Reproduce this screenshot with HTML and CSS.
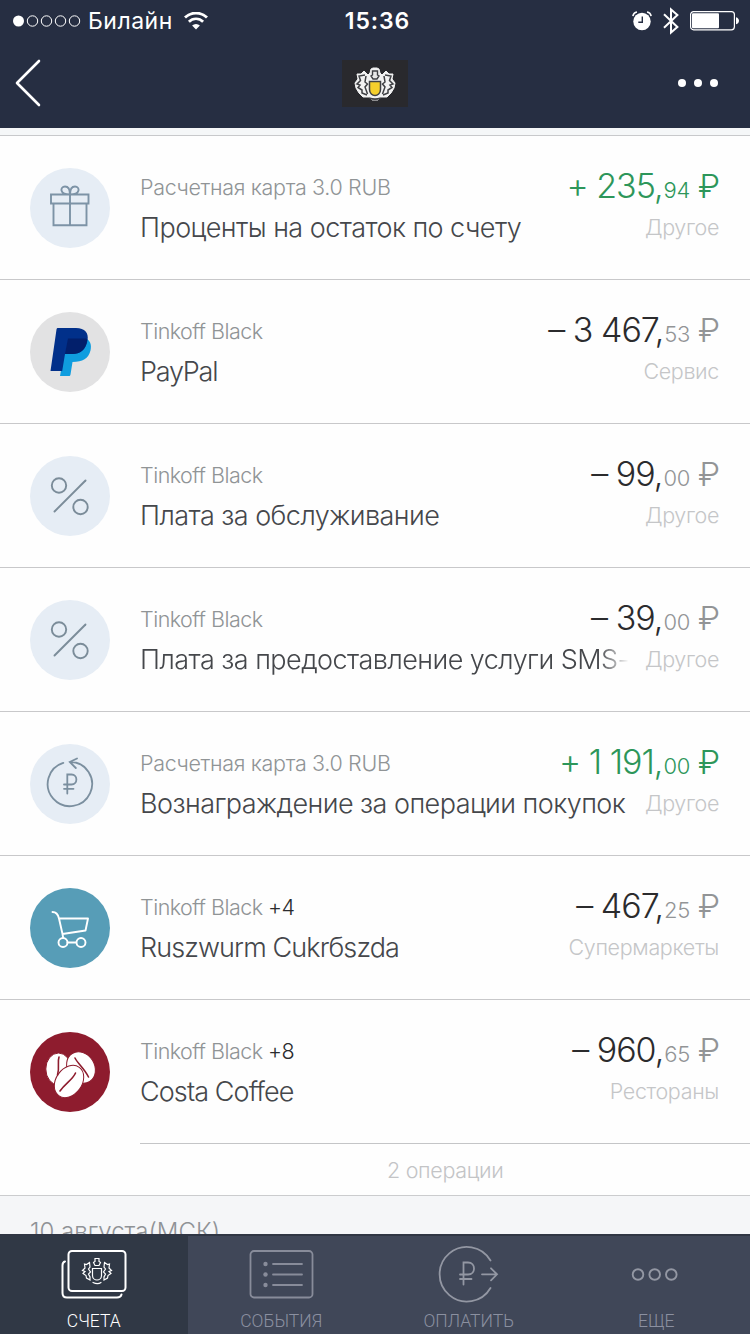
FILE: index.html
```html
<!DOCTYPE html>
<html lang="ru">
<head>
    <meta charset="UTF-8">
    <meta name="viewport" content="width=device-width, initial-scale=1.0">
    <title>Tinkoff</title>
    <link rel="stylesheet" href="styles.css">
</head>
<body>
    <header>
        <div class="status-bar">
            <div class="status-left">
                <svg class="signal" width="68" height="12" viewBox="0 0 68 12">
                    <circle cx="5.5" cy="6" r="5.5" fill="#fff"/>
                    <g fill="none" stroke="#fff" stroke-width="1">
                        <circle cx="19.5" cy="6" r="5.2"/>
                        <circle cx="33.5" cy="6" r="5.2"/>
                        <circle cx="47.5" cy="6" r="5.2"/>
                        <circle cx="61.5" cy="6" r="5.2"/>
                    </g>
                </svg>
                <span class="carrier">Билайн</span>
                <svg class="wifi" width="24" height="18" viewBox="0 0 24 18">
                    <path d="M1 5.6a15.6 15.6 0 0 1 22 0" fill="none" stroke="#fff" stroke-width="2.8"/>
                    <path d="M4.9 9.7a10 10 0 0 1 14.2 0" fill="none" stroke="#fff" stroke-width="2.7"/>
                    <path d="M12 17.6l-3.9-4a5.6 5.6 0 0 1 7.8 0z" fill="#fff"/>
                </svg>
            </div>
            <div class="time">15:36</div>
            <div class="status-right">
                <svg width="20" height="20" viewBox="0 0 20 20">
                    <circle cx="10" cy="10.5" r="8.7" fill="#fff"/>
                    <path d="M.9 5.2A5 5 0 0 1 5 1M19.1 5.2A5 5 0 0 0 15 1" fill="none" stroke="#fff" stroke-width="1.6"/>
                    <path d="M10.3 5.5v5.7H6.3" fill="none" stroke="#252d42" stroke-width="1.4"/>
                </svg>
                <svg width="16" height="28" viewBox="0 0 16 28">
                    <path d="M1 7.3l13.4 12.6L8 25.6V2.4l6.4 5.7L1 20.7" fill="none" stroke="#fff" stroke-width="2"/>
                </svg>
                <svg width="50" height="20" viewBox="0 0 50 20">
                    <rect x=".6" y=".6" width="43.8" height="18.2" rx="3" fill="none" stroke="#fff" stroke-width="1.2"/>
                    <rect x="2" y="2.2" width="27" height="15" rx="1" fill="#fff"/>
                    <path d="M46 6.3c4 1 4 6 0 7z" fill="#fff"/>
                </svg>
            </div>
        </div>
        <div class="nav-bar">
            <svg class="back" width="26" height="48" viewBox="0 0 26 48">
                <path d="M24 2L2 24l22 22" fill="none" stroke="#fff" stroke-width="2.6" stroke-linecap="round" stroke-linejoin="round"/>
            </svg>
            <div class="logo">
                <svg width="42" height="34" viewBox="0 0 42 34">
                    <path d="M16 6l1-4 2-1h4l2 1 1 4 2 2 4-4 3 3 4 0-1 5 3 4-1 5-3 5-4 4-6 0-3 3h-6l-3-3-6 0-4-4-3-5-1-5 3-4-1-5h4l3-3 4 4z" fill="#f2f2f2" stroke="#f2f2f2" stroke-linejoin="round"/>
                    <path d="M11 8L5 9l1.500 4.500-3.500 3.500 3 1-2 2.500 4 2.500 0 3 5 2M31 8l6 1-1.500 4.500 3.500 3.500-3 1 2 2.500-4 2.500 0 3-5 2M12 9l-1 6 2.500 2-2.500 3 2.500 7M30 9l1 6-2.500 2 2.500 3-2.500 7M15 31c4 1.500 8 1.500 12 0" fill="none" stroke="#3f4044" stroke-width="1.500"/>
                    <path d="M18.500 4h5v4l1.500 1-2 3h-4l-2-3 1.500-1z" fill="#e8e8e8" stroke="#3f4044" stroke-width="1.400"/>
                    <path d="M15.500 14.500h11v8c0 4-3 6-5.500 6s-5.500-2-5.500-6z" fill="#f5cf2c" stroke="#3f4044" stroke-width="1.500"/>
                </svg>
            </div>
            <div class="more"><i></i><i></i><i></i></div>
        </div>
    </header>

    <main>
        <div class="strip"></div>
        <div class="row">
            <div class="icon">
                <svg width="80" height="80" viewBox="0 0 80 80" fill="none" stroke="#7d93a6" stroke-width="1.9">
                    <path d="M21 26.5h37.500v9H21zM23.500 35.500v21.700h33V35.500M40 26.500v30.700M40 26.500c-11 0-10-8-5-8 3 0 5 3 5 8 0-5 2-8 5-8 5 0 6 8-5 8z"/>
                </svg>
            </div>
            <div class="info">
                <div class="line">
                    <div class="account wide">Расчетная карта 3.0 RUB</div>
                    <div class="amount plus">+ 235,<small>94 <b>₽</b></small></div>
                </div>
                <div class="line">
                    <div class="name">Проценты на остаток по счету</div>
                    <div class="category">Другое</div>
                </div>
            </div>
        </div>
        <div class="row">
            <div class="icon paypal">
                <svg width="80" height="80" viewBox="0 0 80 80">
                    <path d="M37 25.5h17c6 2 8 7 6.500 13-2 8-8 11.500-18 11.500l-2 12.500c-.2 1.300-.8 1.500-1.500 1.500h-9z" fill="#0f9ddf"/>
                    <path d="M28 16h18c9 0 13 5 11.500 12.500C56 38 50 42 42 42h-7l-2.800 17H20.500L26.500 17.500c.2-1 .5-1.500 1.500-1.500z" fill="#01308a"/>
                    <path d="M38 26.500h17c1 0 1.500.5 2.200 1.200C56 38 50 42 42 42h-7z" fill="#021f6b"/>
                </svg>
            </div>
            <div class="info">
                <div class="line">
                    <div class="account">Tinkoff Black</div>
                    <div class="amount">– 3 467,<small>53 <b>₽</b></small></div>
                </div>
                <div class="line">
                    <div class="name paypal-name">PayPal</div>
                    <div class="category">Сервис</div>
                </div>
            </div>
        </div>
        <div class="row">
            <div class="icon">
                <svg width="80" height="80" viewBox="0 0 80 80" fill="none" stroke="#7b8c99" stroke-width="1.9" stroke-linecap="round">
                    <circle cx="29" cy="29.5" r="7.2"/><circle cx="50.5" cy="51" r="7.2"/><path d="M55.500 24.500L24.500 55.500"/>
                </svg>
            </div>
            <div class="info">
                <div class="line">
                    <div class="account">Tinkoff Black</div>
                    <div class="amount">– 99,<small>00 <b>₽</b></small></div>
                </div>
                <div class="line">
                    <div class="name">Плата за обслуживание</div>
                    <div class="category">Другое</div>
                </div>
            </div>
        </div>
        <div class="row">
            <div class="icon">
                <svg width="80" height="80" viewBox="0 0 80 80" fill="none" stroke="#7b8c99" stroke-width="1.9" stroke-linecap="round">
                    <circle cx="29" cy="29.5" r="7.2"/><circle cx="50.5" cy="51" r="7.2"/><path d="M55.500 24.500L24.500 55.500"/>
                </svg>
            </div>
            <div class="info">
                <div class="line">
                    <div class="account">Tinkoff Black</div>
                    <div class="amount">– 39,<small>00 <b>₽</b></small></div>
                </div>
                <div class="line">
                    <div class="name fade">Плата за предоставление услуги SMS-</div>
                    <div class="category">Другое</div>
                </div>
            </div>
        </div>
        <div class="row">
            <div class="icon">
                <svg width="80" height="80" viewBox="0 0 80 80" fill="none" stroke="#7b8f9f" stroke-width="1.8" stroke-linecap="round">
                    <path d="M33.300 18.800A22.200 22.200 0 1 0 40 17.800M47 14.500l-7.200 3.500 6 6"/>
                    <path d="M37.300 49.500V30.500h4.200c6.500 0 6.500 10 0 10h-7.500M34 44.800h9.500"/>
                </svg>
            </div>
            <div class="info">
                <div class="line">
                    <div class="account wide">Расчетная карта 3.0 RUB</div>
                    <div class="amount plus">+ 1 191,<small>00 <b>₽</b></small></div>
                </div>
                <div class="line">
                    <div class="name">Вознаграждение за операции покупок</div>
                    <div class="category">Другое</div>
                </div>
            </div>
        </div>
        <div class="row">
            <div class="icon market">
                <svg width="80" height="80" viewBox="0 0 80 80" fill="none" stroke="#fff" stroke-width="1.9" stroke-linecap="round" stroke-linejoin="round">
                    <path d="M22.500 24c4 0 5.500 2 6.500 6.500h29L55.500 42.500l-23 3.500L29 30.500M32.500 46l.7 4M37.500 54.500h8.500"/>
                    <circle cx="33" cy="54.5" r="4.5"/><circle cx="51" cy="54.5" r="4.5"/>
                </svg>
            </div>
            <div class="info">
                <div class="line">
                    <div class="account">Tinkoff Black <em>+4</em></div>
                    <div class="amount">– 467,<small>25 <b>₽</b></small></div>
                </div>
                <div class="line">
                    <div class="name latin">Ruszwurm Cukrбszda</div>
                    <div class="category">Супермаркеты</div>
                </div>
            </div>
        </div>
        <div class="row last">
            <div class="icon costa">
                <svg width="80" height="80" viewBox="0 0 80 80">
                    <g fill="#fff" stroke="#8e1c2e" stroke-width="1">
                        <ellipse cx="28.500" cy="37" rx="12.700" ry="16"/>
                        <ellipse cx="51" cy="35.500" rx="13.500" ry="16.500" transform="rotate(-32 51 35.500)"/>
                        <ellipse cx="39" cy="49.500" rx="13" ry="17.500" transform="rotate(36 39 49.500)"/>
                    </g>
                    <path d="M29 25c-2 6 1 10-1.500 18M45 26c3 6 9 10 13.500 19M45.500 41c-3 7-10 10-15.500 18" fill="none" stroke="#8e1c2e" stroke-width="1.6" stroke-linecap="round"/>
                </svg>
            </div>
            <div class="info">
                <div class="line">
                    <div class="account">Tinkoff Black <em>+8</em></div>
                    <div class="amount">– 960,<small>65 <b>₽</b></small></div>
                </div>
                <div class="line">
                    <div class="name latin">Costa Coffee</div>
                    <div class="category">Рестораны</div>
                </div>
            </div>
        </div>
        <div class="count"><span>2 операции</span></div>
        <div class="date">10 августа(МСК)</div>
    </main>

    <nav class="tabs">
        <div class="tab active">
            <svg width="66" height="58" viewBox="0 0 66 58" fill="none" stroke="#fff" stroke-width="2" stroke-linecap="round">
                <rect x="7.500" y="6" width="57" height="40" rx="3.500"/>
                <path d="M4 16.500c-2 .5-2.500 2-2.500 4V48c0 3 1.500 4.500 4.500 4.500h50c2.500 0 4-1 4.500-3"/>
                <g stroke-width="1.200">
                    <path d="M31.500 23.500h9v7c0 3-2.500 4.500-4.500 4.500s-4.500-1.500-4.500-4.500zM34 13.500h4v3l1.500 1-1.500 3h-4l-1.500-3 1.500-1zM32 37.500c3 1.500 6 1.500 8 0"/>
                    <path d="M28.500 17.500l-3 2-2-.5.5 4-2.500 2.500 2.500 1-2 2 3 2 .5 2.500 3.500 2v-3l-1.500-3 2-2-2-3 1.500-2zM43.500 17.500l3 2 2-.5-.5 4 2.500 2.500-2.500 1 2 2-3 2-.5 2.500-3.500 2v-3l1.500-3-2-2 2-3-1.500-2z"/>
                </g>
            </svg>
            <span>СЧЕТА</span>
        </div>
        <div class="tab">
            <svg width="66" height="58" viewBox="-1 0 66 58" fill="none" stroke="#888c9a" stroke-width="1.8" stroke-linecap="round">
                <rect x="1.500" y="6" width="62" height="46.500" rx="3.500"/>
                <path d="M24 19h29M24 29.500h29M24 40h29"/>
                <g fill="#888c9a" stroke="none"><circle cx="16.500" cy="19" r="2.200"/><circle cx="16.500" cy="29.500" r="2.200"/><circle cx="16.500" cy="40" r="2.200"/></g>
            </svg>
            <span>СОБЫТИЯ</span>
        </div>
        <div class="tab">
            <svg width="66" height="58" viewBox="1 0 66 58" fill="none" stroke="#9397a3" stroke-width="1.8" stroke-linecap="round">
                <path d="M55.500 15.500A27.300 27.300 0 1 0 55.500 43M47 29.300h15M56 23.300l6 6-6 6"/>
                <path d="M28.500 39.500V17.500h4.500c8 0 8 12 0 12h-8M25 34h11.500"/>
            </svg>
            <span>ОПЛАТИТЬ</span>
        </div>
        <div class="tab">
            <svg width="66" height="58" viewBox="1 0 66 58" fill="none" stroke="#9397a3" stroke-width="1.9">
                <circle cx="16" cy="29.500" r="5.300"/><circle cx="32.700" cy="29.500" r="5.300"/><circle cx="49.300" cy="29.500" r="5.300"/>
            </svg>
            <span>ЕЩЕ</span>
        </div>
    </nav>
</body>
</html>
```
FILE: styles.css
```css
body {
    margin: 0;
    width: 750px;
    height: 1334px;
    display: flex;
    flex-direction: column;
    overflow: hidden;
    background: #fefefe;
    font-family: Inter, "Open Sans", sans-serif;
    font-weight: 300;
}
svg {
    display: block;
    flex: none;
}
header {
    height: 128px;
    flex: none;
    background: #262e42;
    color: #fff;
}
.status-bar, .nav-bar {
    display: grid;
    grid-template-columns: 1fr auto 1fr;
    align-items: center;
}
.status-bar {
    height: 41px;
    padding: 0 10px 0 13px;
}
.status-left, .status-right {
    display: flex;
    align-items: center;
}
.status-right {
    justify-content: flex-end;
    gap: 11px;
}
.carrier {
    margin-left: 7px;
    font-size: 23px;
    font-weight: 400;
    letter-spacing: 0.5px;
}
.wifi {
    margin-left: 11px;
}
.time {
    margin-left: 2px;
    font-size: 23px;
    font-weight: 600;
    letter-spacing: 0.9px;
}
.nav-bar {
    height: 83px;
    padding: 0 32px 0 15px;
}
.logo {
    display: flex;
    align-items: center;
    justify-content: center;
    width: 66px;
    height: 47px;
    margin: 2px 0 0 17px;
    background: #29292d;
}
.more {
    display: flex;
    justify-content: flex-end;
    gap: 8px;
}
.more i {
    width: 8px;
    height: 8px;
    border-radius: 50%;
    background: #fff;
}
main {
    flex: 1;
    min-height: 0;
    overflow: hidden;
}
.strip {
    height: 7px;
    background: #f5f7f8;
    border-bottom: 1px solid #c8c9cb;
}
.row {
    display: flex;
    box-sizing: border-box;
    height: 144px;
    padding: 32px 31px 0 30px;
    border-bottom: 1px solid #c8c8ca;
}
.row.last {
    height: 143px;
    border-bottom: none;
}
.icon {
    width: 80px;
    height: 80px;
    flex: none;
    margin-right: 30px;
    border-radius: 50%;
    background: #e6edf5;
}
.paypal { background: #e2e2e3; }
.market { background: #579db7; }
.costa { background: #8e1c2e; }
.info {
    flex: 1;
    min-width: 0;
}
.line {
    display: flex;
    justify-content: space-between;
    align-items: flex-start;
    height: 40px;
    white-space: nowrap;
}
.account {
    font-size: 21.5px;
    line-height: 39px;
    letter-spacing: -0.53px;
    color: #909496;
}
.account.wide {
    letter-spacing: -0.34px;
}
.account em {
    font-style: normal;
    color: #2b2c2e;
}
.amount {
    font-size: 34px;
    line-height: 36px;
    color: #2b2b2d;
    letter-spacing: -1px;
}
.amount small {
    margin-left: 1px;
    font-size: 22px;
    letter-spacing: -0.3px;
    color: #929496;
}
.amount b {
    margin: 0 -1px 0 2px;
    font-size: 33px;
    font-weight: 300;
    letter-spacing: 0;
}
.plus, .plus small {
    color: #2d965a;
}
.name {
    font-size: 27px;
    line-height: 39px;
    letter-spacing: -0.55px;
    color: #45474b;
    min-width: 0;
}
.name.latin {
    letter-spacing: -0.9px;
}
.name.paypal-name {
    letter-spacing: -1.2px;
}
.fade {
    -webkit-mask-image: linear-gradient(to right, #000 calc(100% - 30px), transparent);
    mask-image: linear-gradient(to right, #000 calc(100% - 30px), transparent);
}
.category {
    font-size: 21.5px;
    line-height: 39px;
    letter-spacing: -0.35px;
    color: #c5c6c8;
}
.count {
    height: 52px;
    border-bottom: 1px solid #cbccce;
}
.count span {
    display: block;
    margin-left: 140px;
    border-top: 1px solid #c4c5c7;
    font-size: 21.5px;
    line-height: 53px;
    letter-spacing: -0.3px;
    text-indent: 247px;
    color: #c3c4c6;
}
.date {
    height: 60px;
    padding: 16px 30px 0;
    background: #f5f6f8;
    font-size: 24px;
    line-height: 40px;
    color: #8f9296;
}
.tabs {
    display: grid;
    grid-template-columns: repeat(4, 1fr);
    flex: none;
    box-sizing: border-box;
    height: 100px;
    border-top: 2px solid #303644;
    background: #404758;
}
.tab {
    display: flex;
    flex-direction: column;
    align-items: center;
    padding-top: 9px;
    font-family: Roboto, sans-serif;
    font-size: 17.5px;
    color: #8b90a0;
}
.tab span {
    margin-top: 7px;
    line-height: 22px;
}
.active {
    background: #303845;
    color: #fff;
}
```
